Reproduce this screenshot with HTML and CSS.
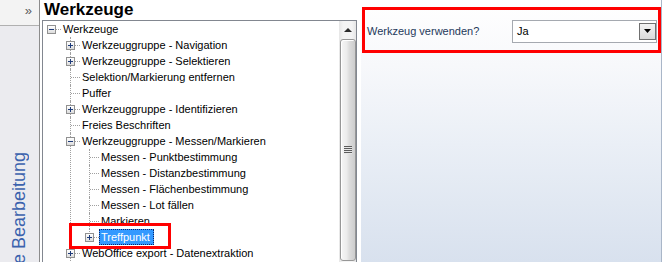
FILE: index.html
```html
<!DOCTYPE html>
<html lang="de">
<head>
    <meta charset="UTF-8">
    <title>Werkzeuge</title>
    <link rel="stylesheet" href="styles.css">
</head>
<body>
    <div class="app">
        <!-- Collapsed dock on the left -->
        <aside class="dock">
            <div class="dock-head">&raquo;</div>
            <div class="dock-body">
                <span class="dock-title">Werkzeuge Bearbeitung</span>
            </div>
        </aside>

        <!-- Tool tree -->
        <section class="tools">
            <h1 class="tools-title">Werkzeuge</h1>
            <div class="tree-box">
                <ul class="tree">
                    <li>
                        <div class="node"><span class="exp"><i class="pm"></i></span><span class="lbl">Werkzeuge</span></div>
                        <ul>
                            <li><div class="node"><span class="exp"><i class="pm plus"></i></span><span class="lbl">Werkzeuggruppe - Navigation</span></div></li>
                            <li><div class="node"><span class="exp"><i class="pm plus"></i></span><span class="lbl">Werkzeuggruppe - Selektieren</span></div></li>
                            <li><div class="node"><span class="exp"></span><span class="lbl">Selektion/Markierung entfernen</span></div></li>
                            <li><div class="node"><span class="exp"></span><span class="lbl">Puffer</span></div></li>
                            <li><div class="node"><span class="exp"><i class="pm plus"></i></span><span class="lbl">Werkzeuggruppe - Identifizieren</span></div></li>
                            <li><div class="node"><span class="exp"></span><span class="lbl">Freies Beschriften</span></div></li>
                            <li>
                                <div class="node"><span class="exp"><i class="pm"></i></span><span class="lbl">Werkzeuggruppe - Messen/Markieren</span></div>
                                <ul>
                                    <li><div class="node"><span class="exp"></span><span class="lbl">Messen - Punktbestimmung</span></div></li>
                                    <li><div class="node"><span class="exp"></span><span class="lbl">Messen - Distanzbestimmung</span></div></li>
                                    <li><div class="node"><span class="exp"></span><span class="lbl">Messen - Flächenbestimmung</span></div></li>
                                    <li><div class="node"><span class="exp"></span><span class="lbl">Messen - Lot fällen</span></div></li>
                                    <li><div class="node"><span class="exp"></span><span class="lbl">Markieren</span></div></li>
                                    <li class="last"><div class="node"><span class="exp"><i class="pm plus"></i></span><span class="lbl sel">Treffpunkt</span></div></li>
                                </ul>
                            </li>
                            <li><div class="node"><span class="exp"><i class="pm plus"></i></span><span class="lbl">WebOffice export - Datenextraktion</span></div></li>
                        </ul>
                    </li>
                </ul>
                <div class="vscroll">
                    <div class="sb-up"><span class="sb-arrow"></span></div>
                    <div class="sb-thumb"><span class="sb-grip"></span></div>
                </div>
            </div>
            <div class="mark mark-tree"></div>
        </section>

        <!-- Properties of the selected tool -->
        <section class="props">
            <div class="prop-row">
                <span class="prop-label">Werkzeug verwenden?</span>
                <div class="combo">
                    <span class="combo-value">Ja</span>
                    <span class="combo-btn">
                        <svg width="7" height="4" viewBox="0 0 7 4"><path d="M0 0h7L3.5 4z" fill="#000"/></svg>
                    </span>
                </div>
            </div>
        </section>
    </div>
</body>
</html>
```

FILE: styles.css
```css
* {
    box-sizing: border-box;
}

body {
    margin: 0;
    background: #fff;
    font-family: 'Liberation Sans', Arial, sans-serif;
    font-size: 11px;
    color: #000;
}

.app {
    display: flex;
    width: 663px;
    height: 262px;
    overflow: hidden;
}

/* Dock */
.dock {
    width: 40px;
    flex: none;
    display: flex;
    flex-direction: column;
    background: #ebebef;
    border-right: 1px solid #8c8c8c;
}

.dock-head {
    height: 26px;
    flex: none;
    background: #f3f3f3;
    border-bottom: 1px solid #b0b0b0;
    text-align: right;
    padding-right: 7px;
    font-size: 13px;
    line-height: 22px;
    color: #5a5a5a;
}

.dock-body {
    flex: 1;
    display: flex;
    align-items: flex-start;
    overflow: hidden;
}

.dock-title {
    margin: 126px 0 0 9px;
    writing-mode: vertical-rl;
    transform: rotate(180deg);
    white-space: nowrap;
    font-size: 18px;
    line-height: 20px;
    color: #3b62ad;
}

/* Tool tree */
.tools {
    position: relative;
    width: 317px;
    flex: none;
    padding-left: 2px;
    display: flex;
    flex-direction: column;
}

.tools-title {
    margin: 0;
    height: 21px;
    padding-left: 2px;
    font-size: 17px;
    line-height: 20px;
    font-weight: bold;
}

.tree-box {
    width: 315px;
    height: 245px;
    flex: none;
    display: flex;
    border: 1px solid #828790;
}

.tree,
.tree ul {
    list-style: none;
    margin: 0;
    padding: 0;
}

.tree {
    flex: 1;
    overflow: hidden;
}

.tree ul {
    padding-left: 19px;
}

.tree li {
    position: relative;
}

.tree ul > li::before {
    content: '';
    position: absolute;
    left: 8px;
    top: 0;
    bottom: 0;
    border-left: 1px dotted #a0a0a0;
}

.tree ul > li.last::before {
    bottom: auto;
    height: 9px;
}

.node {
    display: flex;
    align-items: center;
    height: 16px;
}

.exp {
    position: relative;
    width: 18px;
    height: 16px;
    flex: none;
}

.exp::after {
    content: '';
    position: absolute;
    left: 9px;
    right: 0;
    top: 8px;
    border-top: 1px dotted #a0a0a0;
}

.pm {
    position: absolute;
    left: 4px;
    top: 4px;
    width: 9px;
    height: 9px;
    z-index: 1;
    border: 1px solid #919191;
    background: linear-gradient(#ffffff, #dcdcdc);
}

.pm::before {
    content: '';
    position: absolute;
    left: 1px;
    top: 3px;
    width: 5px;
    height: 1px;
    background: #1e3b7a;
}

.pm.plus::after {
    content: '';
    position: absolute;
    left: 3px;
    top: 1px;
    width: 1px;
    height: 5px;
    background: #1e3b7a;
}

.lbl {
    border: 1px solid transparent;
    padding: 0 3px 0 1px;
    line-height: 14px;
    white-space: nowrap;
}

.lbl.sel {
    background: #3399ff;
    color: #fff;
    border: 1px dotted #0a246a;
}

/* Scrollbar */
.vscroll {
    width: 17px;
    flex: none;
    display: flex;
    flex-direction: column;
    background: linear-gradient(to right, #e6e6e6, #f4f4f4 25%, #f4f4f4 75%, #e6e6e6);
}

.sb-up {
    height: 17px;
    display: flex;
    align-items: center;
    justify-content: center;
}

.sb-arrow {
    width: 0;
    height: 0;
    border-left: 4px solid transparent;
    border-right: 4px solid transparent;
    border-bottom: 4px solid #2b2b2b;
}

.sb-thumb {
    height: 222px;
    margin: 1px 0 0 1px;
    display: flex;
    align-items: center;
    justify-content: center;
    border: 1px solid #979797;
    border-radius: 3px;
    background: linear-gradient(to right, #f6f6f6, #ececec 40%, #dcdcdc 60%, #cdcdcd);
    box-shadow: inset 1px 1px 0 #fff;
}

.sb-grip {
    width: 8px;
    height: 8px;
    background: repeating-linear-gradient(#5c5c5c 0 1px, #e8e8e8 1px 2px);
}

/* Highlight marks */
.mark {
    position: absolute;
    border: 3px solid #ff0000;
}

.mark-tree {
    left: 29px;
    top: 223px;
    width: 102px;
    height: 26px;
}

/* Properties */
.props {
    width: 301px;
    flex: none;
    margin-left: 4px;
    padding: 7px 0 0 1px;
    border-right: 1px solid #a9b6c8;
    background: linear-gradient(#ffffff 0, #f7f8fb 25%, #eaeff6 55%, #d8e1ee 100%);
}

.prop-row {
    height: 46px;
    display: flex;
    align-items: center;
    justify-content: space-between;
    padding: 2px 1px 0 2px;
    border: 3px solid #ff0000;
}

.prop-label {
    color: #1e395b;
}

.combo {
    width: 145px;
    height: 23px;
    display: flex;
    align-items: center;
    border: 1px solid #a5a9b0;
    background: #fff;
}

.combo-value {
    padding-left: 4px;
}

.combo-btn {
    margin-left: auto;
    width: 17px;
    height: 17px;
    display: flex;
    align-items: center;
    justify-content: center;
    border: 1px solid #707070;
    background: linear-gradient(#f3f3f3, #dadada);
}
```
